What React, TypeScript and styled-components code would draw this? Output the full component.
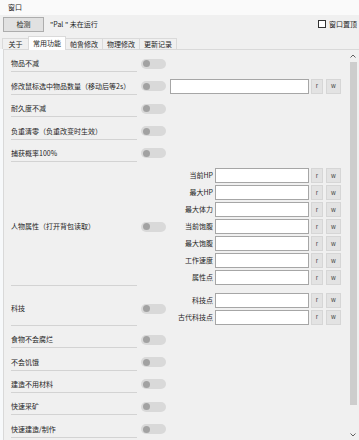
import React from 'react';
import styled, { createGlobalStyle } from 'styled-components';

const GlobalStyle = createGlobalStyle`
  html, body {
    margin: 0;
    padding: 0;
    background: #f0f0f0;
  }
  body {
    font-family: "Noto Sans CJK SC", "Noto Sans", sans-serif;
    font-size: 7px;
    color: #1e1e1e;
  }
  * {
    box-sizing: border-box;
  }
`;

interface FeatureRow {
  label: string;
  input?: boolean;
  fields?: string[];
}

const ROWS: FeatureRow[] = [
  { label: '物品不减' },
  { label: '修改鼠标选中物品数量（移动后等2s）', input: true },
  { label: '耐久度不减' },
  { label: '负重清零（负重改变时生效）' },
  { label: '捕获概率100%' },
  {
    label: '人物属性（打开背包读取）',
    fields: ['当前HP', '最大HP', '最大体力', '当前饱腹', '最大饱腹', '工作速度', '属性点'],
  },
  { label: '科技', fields: ['科技点', '古代科技点'] },
  { label: '食物不会腐烂' },
  { label: '不会饥饿' },
  { label: '建造不用材料' },
  { label: '快速采矿' },
  { label: '快速建造/制作' },
];

const TABS = ['关于', '常用功能', '帕鲁修改', '物理修改', '更新记录'];

const ReadWrite = () => (
  <>
    <SmallButton $w={12}>r</SmallButton>
    <SmallButton $w={15} style={{ marginLeft: 1 }}>w</SmallButton>
  </>
);

const Chevron = ({ up }: { up?: boolean }) => (
  <svg width="6" height="4" viewBox="0 0 6 4">
    <polyline
      points={up ? '0.5,3.5 3,1 5.5,3.5' : '0.5,0.5 3,3 5.5,0.5'}
      fill="none"
      stroke="#606060"
      strokeWidth="1"
    />
  </svg>
);

const App: React.FC = () => {
  return (
    <Window>
      <GlobalStyle />
      <TitleBar>窗口</TitleBar>

      <Toolbar>
        <DetectButton>检测</DetectButton>
        <Status>"Pal " 未在运行</Status>
        <PinToggle>
          <Box />
          窗口置顶
        </PinToggle>
      </Toolbar>

      <TabBar>
        {TABS.map((t, i) => (
          <Tab key={t} $active={i === 1}>{t}</Tab>
        ))}
      </TabBar>

      <PanelFrame>
        <Panel>
          <Content>
            {ROWS.map((row) => (
              <Row key={row.label}>
                <LabelCell>{row.label}</LabelCell>
                <ToggleCell>
                  <Switch>
                    <Knob />
                  </Switch>
                </ToggleCell>
                {row.input && (
                  <ExtraCell>
                    <FieldLine>
                      <TextBox $w={139} />
                      <ReadWrite />
                    </FieldLine>
                  </ExtraCell>
                )}
                {row.fields && (
                  <ExtraCell>
                    {row.fields.map((f) => (
                      <FieldLine key={f}>
                        <FieldLabel>{f}</FieldLabel>
                        <TextBox $w={94} />
                        <ReadWrite />
                      </FieldLine>
                    ))}
                  </ExtraCell>
                )}
              </Row>
            ))}
          </Content>

          <ScrollBar>
            <ArrowBox $h={12}>
              <Chevron up />
            </ArrowBox>
            <Thumb />
            <Track />
            <ArrowBox $h={10}>
              <Chevron />
            </ArrowBox>
          </ScrollBar>
        </Panel>
      </PanelFrame>
    </Window>
  );
};

const Window = styled.div`
  width: 359px;
  height: 440px;
  overflow: hidden;
  display: flex;
  flex-direction: column;
  background: #f0f0f0;
`;

const TitleBar = styled.div`
  height: 15px;
  flex-shrink: 0;
  background: #fafafa;
  padding-left: 8px;
  display: flex;
  align-items: center;
  line-height: 1;
`;

const Toolbar = styled.div`
  height: 21px;
  flex-shrink: 0;
  display: flex;
  align-items: flex-start;
  padding: 2px 2px 0 3px;
`;

const DetectButton = styled.button`
  width: 41px;
  height: 15px;
  padding: 0;
  background: #e1e1e1;
  border: 1px solid #adadad;
  font: inherit;
  color: inherit;
  line-height: 1;
`;

const Status = styled.span`
  margin-left: 6px;
  line-height: 15px;
`;

const PinToggle = styled.label`
  margin-left: auto;
  margin-top: 2px;
  display: flex;
  align-items: center;
  gap: 3px;
  line-height: 10px;
`;

const Box = styled.span`
  width: 8px;
  height: 8px;
  border: 1px solid #333;
  background: #fff;
`;

const TabBar = styled.div`
  height: 13px;
  flex-shrink: 0;
  display: flex;
  align-items: flex-end;
  padding-left: 3px;
  position: relative;
  z-index: 1;
`;

const Tab = styled.div<{ $active?: boolean }>`
  min-width: 27px;
  height: ${(p) => (p.$active ? 14 : 11)}px;
  margin-bottom: ${(p) => (p.$active ? -1 : 0)}px;
  padding: 0 4px;
  display: flex;
  align-items: center;
  justify-content: center;
  line-height: 1;
  background: ${(p) => (p.$active ? '#ffffff' : '#f0f0f0')};
  border: 1px solid #dadada;
  border-bottom: none;
  margin-left: -1px;
`;

const PanelFrame = styled.div`
  flex: 1;
  min-height: 0;
  display: flex;
  background: #f7f9fb;
  padding-left: 3px;
`;

const Panel = styled.div`
  flex: 1;
  min-height: 0;
  display: flex;
  background: #f0f0f0;
  border-top: 1px solid #d9d9d9;
  border-left: 1px solid #d9d9d9;
`;

const Content = styled.div`
  flex: 1;
  padding-left: 7px;
  overflow: hidden;
`;

const Row = styled.div`
  display: flex;
  align-items: stretch;
  min-height: 22.4px;
`;

const LabelCell = styled.div`
  width: 126px;
  flex-shrink: 0;
  display: flex;
  align-items: center;
  padding-top: 6.4px;
  border-bottom: 1px solid #d3d3d3;
  line-height: 1;
  white-space: nowrap;
`;

const ToggleCell = styled.div`
  width: 33px;
  flex-shrink: 0;
  display: flex;
  align-items: center;
  padding: 6.4px 0 1px 4px;
`;

const Switch = styled.div`
  width: 25px;
  height: 10px;
  border-radius: 5px;
  background: #d9d9d9;
  display: flex;
  align-items: center;
  padding-left: 1.5px;
`;

const Knob = styled.div`
  width: 7px;
  height: 7px;
  border-radius: 50%;
  background: #a2a2a2;
`;

const ExtraCell = styled.div`
  display: flex;
  flex-direction: column;
  justify-content: center;
  gap: 2px;
  padding: 6.4px 0 1px;
`;

const FieldLine = styled.div`
  display: flex;
  align-items: center;
  gap: 2px;
  height: 15px;
`;

const FieldLabel = styled.span`
  width: 43px;
  text-align: right;
  white-space: nowrap;
  line-height: 1;
`;

const TextBox = styled.div<{ $w: number }>`
  width: ${(p) => p.$w}px;
  height: 15px;
  background: #ffffff;
  border: 1px solid #a6a6a6;
`;

const SmallButton = styled.div<{ $w: number }>`
  width: ${(p) => p.$w}px;
  height: 15px;
  background: #e3e3e3;
  border: 1px solid #d6d6d6;
  display: flex;
  align-items: center;
  justify-content: center;
  font-size: 6px;
  color: #444;
  line-height: 1;
`;

const ScrollBar = styled.div`
  width: 11px;
  flex-shrink: 0;
  display: flex;
  flex-direction: column;
  align-items: center;
  padding-right: 1px;
`;

const ArrowBox = styled.div<{ $h: number }>`
  height: ${(p) => p.$h}px;
  display: flex;
  align-items: center;
  justify-content: center;
`;

const Thumb = styled.div`
  width: 7px;
  height: 343px;
  background: #cdcdcd;
`;

const Track = styled.div`
  flex: 1;
`;

export default App;
